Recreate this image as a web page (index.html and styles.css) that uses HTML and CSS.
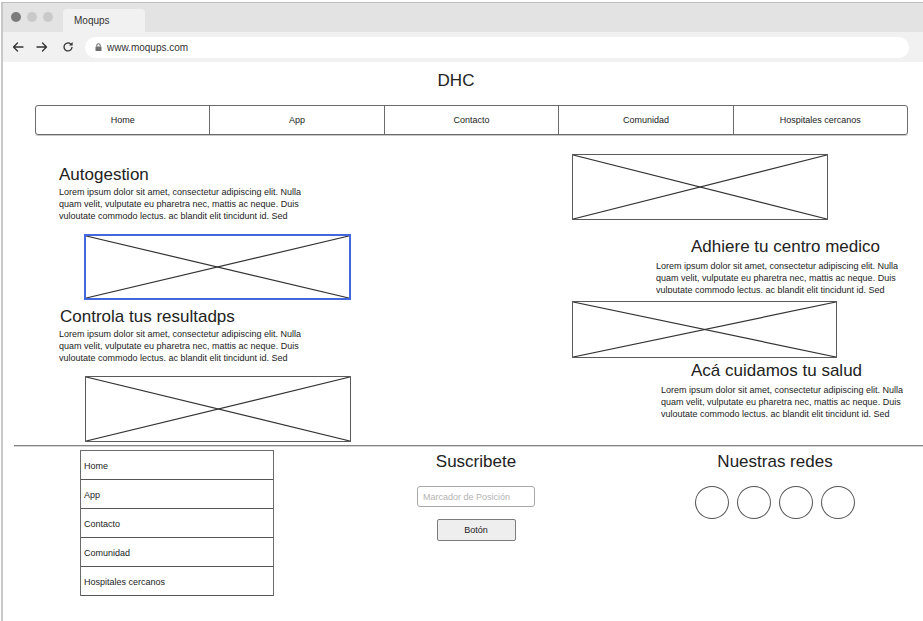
FILE: index.html
```html
<!DOCTYPE html>
<html lang="es">
<head>
<meta charset="utf-8">
<title>DHC</title>
<link rel="stylesheet" href="styles.css">
</head>
<body>
<div class="window">
  <div class="tabbar">
    <div class="dots"><span class="dot dark"></span><span class="dot"></span><span class="dot"></span></div>
    <div class="tab">Moqups</div>
  </div>
  <div class="addressbar">
    <svg class="icon back" viewBox="0 0 12 12" width="12" height="12"><path d="M11 6H1.5M5.5 2L1.5 6l4 4"/></svg>
    <svg class="icon fwd" viewBox="0 0 12 12" width="12" height="12"><path d="M1 6h9.5M6.5 2l4 4-4 4"/></svg>
    <svg class="icon reload" viewBox="0 0 12 12" width="12" height="12"><path d="M10 6.3A4 4 0 1 1 8.6 2.9"/><path class="fill" d="M10.6 1v3.6H7z"/></svg>
    <div class="url">
      <svg class="lock" viewBox="0 0 7 8" width="7" height="8"><path class="shackle" d="M1.8 3.6V2.4a1.7 1.7 0 0 1 3.4 0v1.2"/><rect x="0.5" y="3.5" width="6" height="4.5" rx="0.6"/></svg>
      <span>www.moqups.com</span>
    </div>
  </div>

  <div class="page">
    <h1 class="title">DHC</h1>
    <nav class="nav">
      <a class="nav-item">Home</a>
      <a class="nav-item">App</a>
      <a class="nav-item">Contacto</a>
      <a class="nav-item">Comunidad</a>
      <a class="nav-item">Hospitales cercanos</a>
    </nav>

    <main class="main">
      <section class="col col-left">
        <h2 class="heading h-auto">Autogestion</h2>
        <p class="lorem p-auto">Lorem ipsum dolor sit amet, consectetur adipiscing elit. Nulla<br>quam velit, vulputate eu pharetra nec, mattis ac neque. Duis<br>vuloutate commodo lectus. ac blandit elit tincidunt id. Sed</p>
        <div class="ph ph-selected ph-1">
          <svg viewBox="0 0 100 100" preserveAspectRatio="none"><line x1="0" y1="0" x2="100" y2="100"/><line x1="100" y1="0" x2="0" y2="100"/></svg>
        </div>
        <h2 class="heading h-controla">Controla tus resultadps</h2>
        <p class="lorem p-controla">Lorem ipsum dolor sit amet, consectetur adipiscing elit. Nulla<br>quam velit, vulputate eu pharetra nec, mattis ac neque. Duis<br>vuloutate commodo lectus. ac blandit elit tincidunt id. Sed</p>
        <div class="ph ph-3">
          <svg viewBox="0 0 100 100" preserveAspectRatio="none"><line x1="0" y1="0" x2="100" y2="100"/><line x1="100" y1="0" x2="0" y2="100"/></svg>
        </div>
      </section>

      <section class="col col-right">
        <div class="ph ph-2">
          <svg viewBox="0 0 100 100" preserveAspectRatio="none"><line x1="0" y1="0" x2="100" y2="100"/><line x1="100" y1="0" x2="0" y2="100"/></svg>
        </div>
        <h2 class="heading h-adhiere">Adhiere tu centro medico</h2>
        <p class="lorem p-adhiere">Lorem ipsum dolor sit amet, consectetur adipiscing elit. Nulla<br>quam velit, vulputate eu pharetra nec, mattis ac neque. Duis<br>vulputate commodo lectus. ac blandit elit tincidunt id. Sed</p>
        <div class="ph ph-4">
          <svg viewBox="0 0 100 100" preserveAspectRatio="none"><line x1="0" y1="0" x2="100" y2="100"/><line x1="100" y1="0" x2="0" y2="100"/></svg>
        </div>
        <h2 class="heading h-aca">Acá cuidamos tu salud</h2>
        <p class="lorem p-aca">Lorem ipsum dolor sit amet, consectetur adipiscing elit. Nulla<br>quam velit, vulputate eu pharetra nec, mattis ac neque. Duis<br>vuloutate commodo lectus. ac blandit elit tincidunt id. Sed</p>
      </section>
    </main>

    <div class="sep"></div>

    <footer class="footer">
      <ul class="menu">
        <li class="menu-item">Home</li>
        <li class="menu-item">App</li>
        <li class="menu-item">Contacto</li>
        <li class="menu-item">Comunidad</li>
        <li class="menu-item">Hospitales cercanos</li>
      </ul>
      <div class="subscribe">
        <h3 class="foot-title">Suscribete</h3>
        <input class="field" type="text" placeholder="Marcador de Posición">
        <button class="btn" type="button">Botón</button>
      </div>
      <div class="social">
        <h3 class="foot-title">Nuestras redes</h3>
        <div class="circles"><span class="circle"></span><span class="circle"></span><span class="circle"></span><span class="circle"></span></div>
      </div>
    </footer>
  </div>
</div>
</body>
</html>
```
FILE: styles.css
```css
* { box-sizing: border-box; margin: 0; padding: 0; }
html, body { height: 100%; }
body {
  background: #fff;
  font-family: "Liberation Sans", Arial, sans-serif;
  color: #222;
  overflow: hidden;
}

.window {
  margin: 2px 0 0 1px;
  border-top: 1px solid #bdbdbd;
  border-left: 2px solid #c8c8c8;
  height: 619px;
}

/* ---- browser chrome ---- */
.tabbar {
  height: 29px;
  background: #e3e3e3;
  display: flex;
  align-items: flex-start;
  padding-left: 8px;
}
.dots { display: flex; gap: 6px; margin-top: 9px; }
.dot { width: 10px; height: 10px; border-radius: 50%; background: #c9c9c9; }
.dot.dark { background: #7b7b7b; }
.tab {
  margin-top: 6px;
  margin-left: 10px;
  width: 82px;
  height: 23px;
  background: #f1f1f1;
  border-radius: 4px 4px 0 0;
  font-size: 10px;
  line-height: 24px;
  padding-left: 11px;
  color: #333;
}

.addressbar {
  height: 30px;
  background: #f1f1f1;
  display: flex;
  align-items: center;
  padding-left: 9px;
}
.icon { fill: none; stroke: #333; stroke-width: 1.3; stroke-linecap: round; stroke-linejoin: round; flex: none; }
.icon .fill { fill: #333; stroke: none; }
.fwd { margin-left: 12px; }
.reload { margin-left: 14px; }
.url {
  margin-left: 11px;
  width: 824px;
  height: 21px;
  background: #fff;
  border-radius: 11px;
  display: flex;
  align-items: center;
  padding-left: 10px;
  font-size: 10px;
  color: #333;
}
.lock { margin-right: 5px; }
.lock rect { fill: #6f6f6f; }
.lock .shackle { fill: none; stroke: #6f6f6f; stroke-width: 1.1; }

/* ---- page ---- */
.page { position: relative; }
.title {
  margin-top: 9px;
  padding-right: 14px;
  text-align: center;
  font-size: 17px;
  font-weight: normal;
  line-height: 20px;
  color: #222;
}

.nav {
  display: flex;
  margin: 14px 15px 0 32px;
  height: 30px;
  border: 1px solid #6b6b6b;
  border-radius: 3px;
  box-shadow: 0 1px 0 #c8c8c8;
}
.nav-item {
  flex: 1;
  text-align: center;
  font-size: 9px;
  line-height: 28px;
  color: #222;
  border-left: 1px solid #6b6b6b;
}
.nav-item:first-child { border-left: none; }

.main {
  display: grid;
  grid-template-columns: 460px 1fr;
  height: 310px;
}
.col { display: flex; flex-direction: column; align-items: flex-start; }

.heading {
  font-size: 17px;
  font-weight: normal;
  line-height: 20px;
  color: #222;
  white-space: nowrap;
}
.lorem {
  font-size: 9px;
  line-height: 11.8px;
  color: #222;
  white-space: nowrap;
  overflow: hidden;
}

.ph {
  border: 1px solid #5a5a5a;
  flex: none;
}
.ph svg { display: block; width: 100%; height: 100%; }
.ph line { stroke: #333; stroke-width: 1.2; vector-effect: non-scaling-stroke; }
.ph-selected { border: 2px solid #4267df; }

/* left column */
.h-auto { margin: 30px 0 0 56px; }
.p-auto { margin: 2px 0 0 56px; height: 36px; }
.ph-1 { margin: 11px 0 0 81px; width: 267px; height: 66px; }
.h-controla { margin: 7px 0 0 57px; }
.p-controla { margin: 2px 0 0 56px; height: 35px; }
.ph-3 { margin: 12px 0 0 82px; width: 266px; height: 66px; }

/* right column */
.ph-2 { margin: 19px 0 0 109px; width: 256px; height: 66px; }
.h-adhiere { margin: 17px 0 0 228px; }
.p-adhiere { margin: 4px 0 0 193px; height: 32px; }
.ph-4 { margin: 8px 0 0 109px; width: 265px; height: 57px; }
.h-aca { margin: 3px 0 0 228px; }
.p-aca { margin: 4px 0 0 198px; height: 36px; }

.sep {
  margin-left: 11px;
  height: 2px;
  border-top: 1px solid #858585;
  border-bottom: 1px solid #d4d4d4;
}

/* ---- footer ---- */
.footer { display: flex; align-items: flex-start; }
.menu {
  list-style: none;
  margin: 3px 0 0 77px;
  width: 194px;
  border: 1px solid #6b6b6b;
  border-bottom: none;
}
.menu-item {
  height: 29px;
  line-height: 30px;
  padding-left: 3px;
  font-size: 9px;
  color: #222;
  border-bottom: 1px solid #555;
}
.subscribe, .social {
  width: 200px;
  display: flex;
  flex-direction: column;
  align-items: center;
}
.subscribe { margin-left: 102px; }
.social { margin-left: 99px; }
.foot-title {
  margin-top: 5px;
  font-size: 17px;
  font-weight: normal;
  line-height: 20px;
  color: #222;
}
.field {
  margin-top: 14px;
  width: 118px;
  height: 21px;
  border: 1px solid #a8a8a8;
  border-radius: 3px;
  padding-left: 5px;
  font-family: "Liberation Sans", Arial, sans-serif;
  font-size: 9px;
  color: #222;
  background: #fff;
  outline: none;
}
.field::placeholder { color: #b3b3b3; }
.btn {
  margin-top: 12px;
  width: 79px;
  height: 22px;
  background: #eeeeee;
  border: 1px solid #7c7c7c;
  border-radius: 2px;
  font-family: "Liberation Sans", Arial, sans-serif;
  font-size: 9px;
  color: #222;
}
.circles { display: flex; gap: 8px; margin-top: 14px; }
.circle {
  width: 34px;
  height: 33px;
  border: 1px solid #555;
  border-radius: 50%;
}
```
